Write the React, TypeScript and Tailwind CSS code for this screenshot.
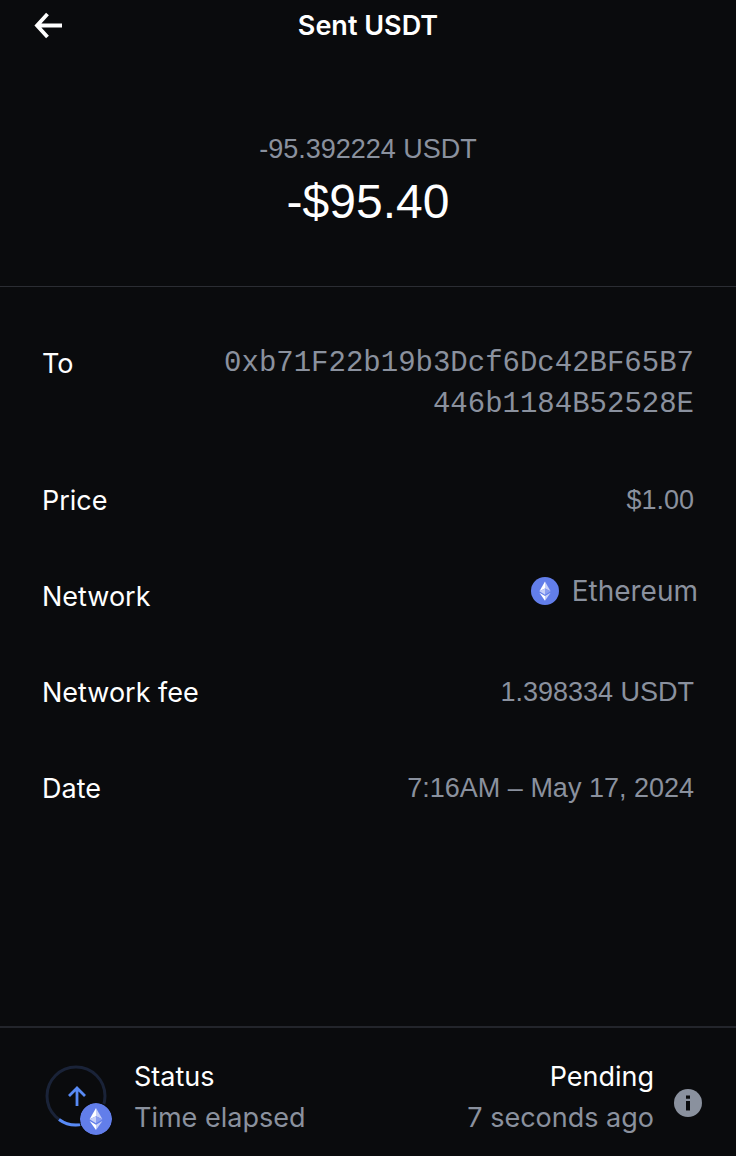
import type { ReactNode } from 'react';

const ADDRESS = '0xb71F22b19b3Dcf6Dc42BF65B7446b1184B52528E';

function EthereumIcon({ className }: { className: string }) {
  return (
    <svg viewBox="0 0 32 32" className={className} aria-hidden="true">
      <circle cx="16" cy="16" r="16" fill="#627eea" />
      <path d="M16 5v8.2l6.4 3.1z" fill="#c7d0f8" />
      <path d="M16 5L9.6 16.3l6.4-3.1z" fill="#fff" />
      <path d="M16 20.3l6.4-4L16 13.2z" fill="#8a9df0" />
      <path d="M9.6 16.3l6.4 4v-7.1z" fill="#c7d0f8" />
      <path d="M16 21.8V27l6.4-9z" fill="#c7d0f8" />
      <path d="M16 27v-5.2L9.6 18z" fill="#fff" />
    </svg>
  );
}

function Row({ label, children }: { label: string; children: ReactNode }) {
  return (
    <div className="flex items-start justify-between gap-6">
      <dt className="whitespace-nowrap">{label}</dt>
      <dd className="text-right text-[#8a919e]">{children}</dd>
    </div>
  );
}

export default function App() {
  return (
    <div className="flex min-h-screen flex-col bg-[#0a0b0d] font-['Inter',sans-serif] text-[27px] leading-[41px] text-white">
      <header className="grid grid-cols-[1fr_auto_1fr] items-center px-8 pt-[5px]">
        <button type="button" aria-label="Back" className="w-8 cursor-pointer">
          <svg viewBox="0 0 32 32" className="size-8" fill="none" stroke="currentColor" strokeWidth="3.8" aria-hidden="true">
            <path d="M30 15.5H5M15.5 4L5 15.5l10.500 11.500" />
          </svg>
        </button>
        <h1 className="font-semibold">Sent USDT</h1>
      </header>

      <section className="border-b border-[#2b2d33] pt-[83px] pb-[52px] text-center font-['Liberation_Sans',sans-serif]">
        <p className="text-[#8a919e]">-95.392224 USDT</p>
        <p className="text-5xl leading-16">-$95.40</p>
      </section>

      <dl className="flex flex-col gap-[55px] px-[42px] py-14">
        <Row label="To">
          <span className="block max-w-[480px] font-['Liberation_Mono',monospace] text-[29px] break-all">{ADDRESS}</span>
        </Row>
        <Row label="Price">
          <span className="block font-['Liberation_Sans',sans-serif]">$1.00</span>
        </Row>
        <Row label="Network">
          <span className="-mr-1 flex items-center gap-[13px] text-[28px] leading-[30px]">
            <EthereumIcon className="size-7" />
            Ethereum
          </span>
        </Row>
        <Row label="Network fee">
          <span className="block font-['Liberation_Sans',sans-serif]">1.398334 USDT</span>
        </Row>
        <Row label="Date">
          <span className="block font-['Liberation_Sans',sans-serif]">7:16AM – May 17, 2024</span>
        </Row>
      </dl>

      <footer className="mt-auto flex items-center border-t-2 border-[#23252b] pt-7 pr-[34px] pb-[18px] pl-11">
        <div className="relative mr-[26px] size-16">
          <svg viewBox="0 0 64 64" className="size-16" fill="none" aria-hidden="true">
            <circle cx="32" cy="31" r="29" stroke="#1a2338" strokeWidth="3" />
            <path d="M15 54.5A29 29 0 0 0 38 59.400" stroke="#588af5" strokeWidth="3" />
            <path d="M33 41V23M25 31l8-8 8 8" stroke="#588af5" strokeWidth="2.800" />
          </svg>
          <EthereumIcon className="absolute -right-1 -bottom-1.5 size-8 rounded-full ring-1 ring-[#0a0b0d]" />
        </div>
        <div>
          <p>Status</p>
          <p className="text-[#8a919e]">Time elapsed</p>
        </div>
        <div className="ml-auto text-right">
          <p>Pending</p>
          <p className="text-[#8a919e]">7 seconds ago</p>
        </div>
        <button type="button" aria-label="Status details" className="mt-3 ml-5 cursor-pointer">
          <svg viewBox="0 0 28 28" className="size-7" aria-hidden="true">
            <circle cx="14" cy="14" r="14" fill="#8a919e" />
            <path d="M12 6.500h4v3.200h-4zM12 12h4v9.500h-4z" fill="#0a0b0d" />
          </svg>
        </button>
      </footer>
    </div>
  );
}
